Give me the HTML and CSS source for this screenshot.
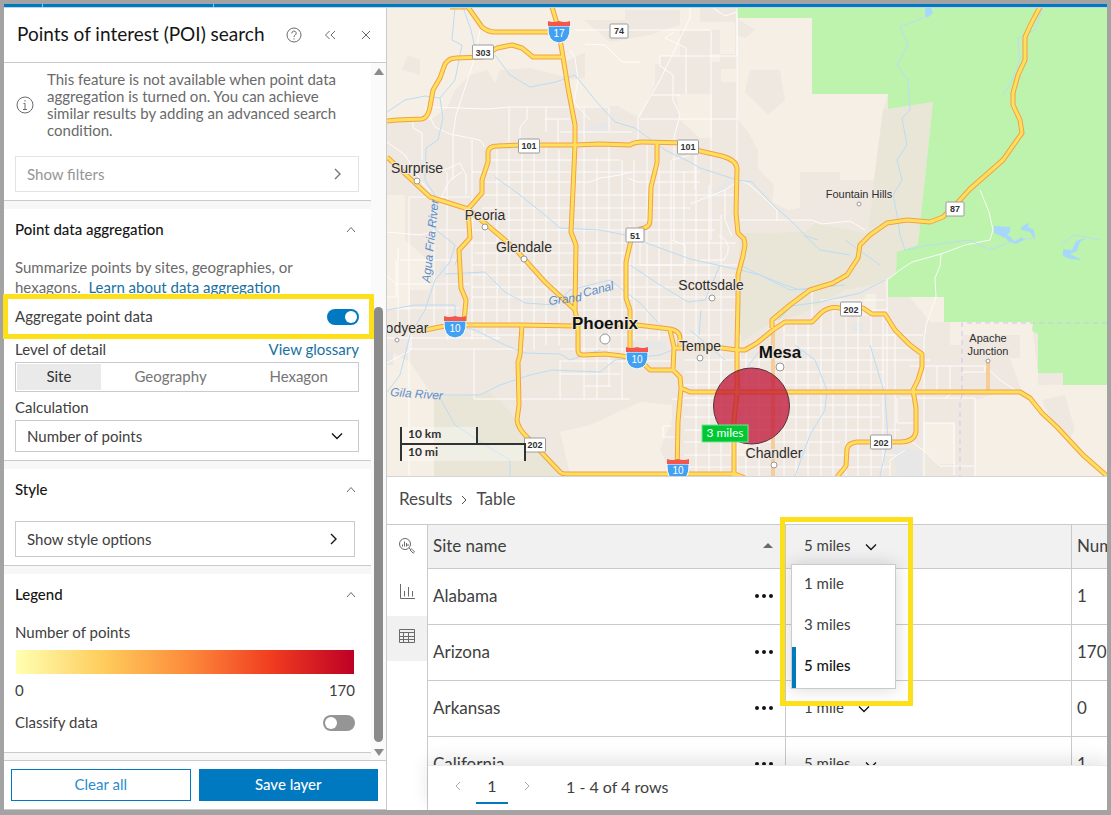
FILE: index.html
```html
<!DOCTYPE html>
<html lang="en">
<head>
<meta charset="utf-8">
<title>Points of interest (POI) search</title>
<link rel="stylesheet" href="styles.css">
</head>
<body>
<div class="app">
  <div class="topbar"><i></i><i></i></div>
  <div class="workspace">
    <aside class="panel">
      <header class="panel-head">
        <h1>Points of interest (POI) search</h1>
        <button class="icon-btn" aria-label="Help"><svg width="16" height="16" viewBox="0 0 16 16"><circle cx="8" cy="8" r="7"/><path d="M5.800 6.400a2.200 2.200 0 1 1 3.300 1.800C8.300 8.700 8 9 8 10"/><path d="M8 11.300v1.200"/></svg></button>
        <button class="icon-btn" aria-label="Collapse"><svg width="16" height="16" viewBox="0 0 16 16"><path d="M7.500 4l-4 4 4 4M13 4L9 8l4 4"/></svg></button>
        <button class="icon-btn" aria-label="Close"><svg width="16" height="16" viewBox="0 0 16 16"><path d="M4 4l8 8M12 4l-8 8"/></svg></button>
      </header>
      <div class="panel-body">
        <div class="panel-content">
          <section class="first">
            <div class="notice">
              <svg width="20" height="20" viewBox="0 0 20 20"><circle cx="10" cy="10" r="8"/><path d="M10 5v1.500M8.500 8.500H10V14M8 14.500h4"/></svg>
              <p>This feature is not available when point data aggregation is turned on. You can achieve similar results by adding an advanced search condition.</p>
            </div>
            <button class="box-btn wide" disabled><span>Show filters</span><svg width="16" height="16" viewBox="0 0 16 16"><path d="M5 3l5 5-5 5"/></svg></button>
          </section>
          <section>
            <h2><button>Point data aggregation<svg width="16" height="16" viewBox="0 0 16 16"><path d="M4 11l4-4.500 4 4.500"/></svg></button></h2>
            <p class="desc">Summarize points by sites, geographies, or hexagons. &nbsp;<a href="#learn">Learn about data aggregation</a></p>
            <div class="row marked"><label for="agg">Aggregate point data</label><input class="switch" type="checkbox" id="agg" checked></div>
            <div class="row level"><span>Level of detail</span><a href="#glossary">View glossary</a></div>
            <div class="segments"><button class="on">Site</button><button>Geography</button><button>Hexagon</button></div>
            <label class="field-label" for="calc">Calculation</label>
            <div class="select-box"><select id="calc"><option>Number of points</option></select><svg width="16" height="16" viewBox="0 0 16 16"><path d="M3 5.500l5 5 5-5"/></svg></div>
          </section>
          <section>
            <h2><button>Style<svg width="16" height="16" viewBox="0 0 16 16"><path d="M4 11l4-4.500 4 4.500"/></svg></button></h2>
            <button class="box-btn style-btn"><span>Show style options</span><svg width="16" height="16" viewBox="0 0 16 16"><path d="M5 3l5 5-5 5"/></svg></button>
          </section>
          <section class="legend">
            <h2><button>Legend<svg width="16" height="16" viewBox="0 0 16 16"><path d="M4 11l4-4.500 4 4.500"/></svg></button></h2>
            <p class="legend-title">Number of points</p>
            <div class="ramp"></div>
            <div class="range"><span>0</span><span>170</span></div>
            <div class="row classify"><label for="cls">Classify data</label><input class="switch" type="checkbox" id="cls"></div>
          </section>
        </div>
        <div class="scrollbar"><b class="up"></b><b class="thumb"></b><b class="down"></b></div>
      </div>
      <footer class="panel-foot"><button class="clear">Clear all</button><button class="save">Save layer</button></footer>
    </aside>

    <main class="main">
      <div class="map">
        <svg class="map-art" viewBox="387 8 720 468" preserveAspectRatio="xMinYMin slice">
          <defs>
            <g id="interstate"><path d="M-11 -5Q-12 11 0 12Q12 11 11 -5Z" fill="#42a0f2" stroke="#fff" stroke-width="1"/><path d="M-11 -5V-10Q-6 -8 0 -10Q6 -8 11 -10V-5Z" fill="#f5564c"/></g>
            <g id="route"><rect x="-9" y="-7" width="18" height="14" rx="1"/></g>
            <g id="route3"><rect x="-10.500" y="-7" width="21" height="14" rx="1"/></g>
            <path id="hwy" d="M450 7H468L482 27Q488 32 495 32H558M387 121L397 120L422 119Q428 118 430 107L433 90L440 78L445 64Q449 58 456 58L483 57L497 48L512 45L522 48L533 57H563M552 7L558 27L563 57L568 88L575 125V145L573 190L571 232L576 245L575 310L578 325V350Q578 355 583 355L605 354L622 356L640 360L650 370H673L680 377L681 388L678 422L677 474M468 209L482 193V180L488 162V152Q489 146 497 146L525 145L575 145L600 144L630 145Q634 142 642 142L688 143L700 151L722 156Q736 160 737 168L736 213L738 233L744 239L745 245L743 256L738 275V300L737 345V392L734 420V476M387 157L401 170L430 197L468 209L505 240L518 252L545 282L575 310M468 209L470 238L459 250L461 288L466 300L464 322M410 331L425 330L445 326L462 325H520L576 326M522 325L520 355L518 362L519 405L517 420Q518 428 526 436L560 472Q562 474 566 474H735L745 478M657 143V163L651 187L650 220Q650 228 640 229L631 240L626 262V298L630 310V350M600 324L637 325L670 329Q681 331 680 340V346M670 330L674 347L673 370M674 348H722L737 350H745L757 343L773 330L785 322H812L822 312Q830 306 840 308H863L872 314H885L895 330L910 345L922 354V367L918 380L913 390L916 408V432Q914 442 900 442H857Q848 443 847 449L846 466L837 477M681 388L690 392H1020L1030 398L1042 413L1057 427L1083 455L1107 476M772 328V320L790 305L810 290L833 283L847 275L858 258L860 245L870 235L887 223L907 220L930 222L943 217L960 200L970 189L1003 160L1022 133L1020 120L1013 105V93L1018 75L1025 60V37L1032 22L1040 7"/>
          </defs>
          <rect x="387" y="7" width="720" height="469" fill="#efe8e1"/>
          <g fill="#f6efe5">
            <path d="M387 7H700V22H735V54H712V62H720V30H680V56H660V64H655V84L640 118L618 106H570V78L530 68L500 70L495 83L488 70L470 75L455 90L447 108L430 120H387Z"/>
            <path d="M737 18H812V94H888L883 110L874 180H840V172H800V208L788 210L772 202L774 185L758 168V150L748 132L737 118Z"/>
            <path d="M676 94H712V138H700L680 120ZM721 69H736V82H721ZM387 195H405V240L430 262V290H410V310H387ZM387 350L410 362L434 398V476H387Z"/>
            <path d="M560 432L590 425L640 402L672 405V420L660 450L672 474H570Z"/>
            <path d="M910 297H944V322H1033V334L1038 373V385L1107 384V476H975V400L1000 392H1022L1010 358H1020V335H962V345H950V322H930ZM923 423H955V464H940L923 450ZM866 294H876V316H858ZM730 440H750V455H730Z"/>
          </g>
          <g fill="#efe8e1"><path d="M408 55L420 60V75L402 70ZM584 20H625V10H680V25L650 35L610 42ZM750 70H780L785 100L768 115L745 92ZM565 62L585 52V78L565 80ZM1042 400L1065 395L1075 430L1070 438L1050 418ZM737 18L755 30L745 38L737 35Z"/></g>
          <path fill="#e9e6d8" d="M740 233L805 232L815 223L850 230L868 234L874 180L883 110L933 102L918 245L897 252L896 274L872 285L845 290L800 315L772 322L737 345L738 275ZM434 398L488 392L500 400L518 422L527 435L560 476H434Z"/>
          <path fill="#bef3ae" d="M737 7V18H812V94H888V109L933 102L918 245L897 252L896 273L888 279V297H944V322H1033L1032 331L1038 334V373H1063V385H1107V7Z"/>
          <path fill="#e7e7e8" d="M585 128L605 122L609 124V131H585ZM712 194L728 178L730 184L716 195ZM630 342H666V350H635ZM892 446L922 452V476H897ZM440 268L447 262V272L440 276ZM387 350L393 352V365H387ZM852 322H863V331H852Z"/>

          <g fill="none" stroke="#fff" stroke-width="1" opacity=".9">
            <path d="M430 107L460 108L487 109L509 107H609M560 132H632M545 119H570M509 107V145M527 107V119L520 127V145M546 107V132M558 119V145M584 107V158M609 107V131M480 30L474 60L456 115L453 135V180M425 107L435 127L450 134L475 139Q483 140 484 147M413 120V128L422 133V160M387 142L405 155L420 180L430 192M575 30H710Q712 32 711 40V240M690 7V18L660 80L638 118V145M660 56H737V7M660 56V66L673 75V100L680 115L674 137V240M640 119H737M652 95H680M686 94V48L665 38L674 32M712 7L725 16L737 12V160M585 44L605 45L622 62H640M570 50L575 58L578 80L574 102L590 120"/>
            <path d="M387 276L396 284H470M396 260V297H387M398 248V330M409 197V476M409 197H470M447 172V250M462 172L450 180L440 200M440 172L460 163L466 175V195M472 140V207M387 232L420 235L440 230H470M400 260H460M434 210V325M447 250V325M397 308H460M387 338H500M387 363L411 350V325M409 349H525M474 349V399H630M447 340V325M497 340V325"/>
            <path d="M472 172H700M488 160H620M485 182H590L600 178L620 175L632 172M480 195H737M482 208H690M470 220H720M470 230H715M470 243H736M475 253H625M472 265H737M472 275H737M472 287H737M472 297H737M466 310H737M472 335H720M560 361H673M560 361V399M560 374H620M585 386H611M560 349H625"/>
            <path d="M472 220V340M484 230V340M497 150V325M509 150V325M522 150V340M534 145V350M546 145V345M559 150V345M584 158V399M597 158V399M609 145V386M622 160V399M634 160V340M647 145V340M659 160V340M671 160V280M684 172V350M696 155V350M709 185V390M721 215V390M690 155L672 160M628 178L637 182H700M690 204L725 190L740 180L750 185L777 210V220M740 220H812L822 224L850 221L865 230M725 190V220L732 236"/>
            <path d="M684 360H930M684 372H885M684 385H885M684 405H880M684 417H880M684 430H900M684 442H840M684 455H896M684 467H890M740 360V335M746 350V476M759 345V476M784 325V476M796 322V476M808 322V476M821 315V476M833 310V476M846 310V476M858 310V476M871 315V476M883 315V470M895 330V442M812 290V322M820 300L885 300M785 335H900M785 348H910M820 310H887M684 398H737V476M696 360V476M709 360V476M721 360V476M684 399H672M672 426H663V437H678"/>
            <path d="M887 280V390M887 280L900 270L912 262L941 254L965 245L990 240L993 230L989 212L980 190M941 254L940 266L935 278L936 297L926 325L924 340V400V476M885 335H923M910 366H985L1000 380L1015 390M937 366V395M950 366V395L945 398M962 372H985V366M900 398H975V476M923 423H954V475M912 442L923 450L940 466H975M897 398V423H917M905 450L890 460V476M630 225V300M640 235V265H685V245L672 240M719 235Q735 245 724 260H700M695 155V190"/>
          </g>
          <g fill="none" stroke="#bbdcf4" stroke-width="1">
            <path d="M455 7L452 40L462 45L455 80L440 98L443 118L438 140L426 148L425 180L435 195L430 225L455 245L450 262L435 280L425 310L410 335L400 375L387 392M463 7L471 30L475 48M495 55L510 75L530 87L556 82L575 75L595 100L615 122L635 128L665 150L690 162L700 168L737 180L752 182L775 207L790 220L806 236L818 240M387 112L405 100L425 96L440 98M495 177L520 195L545 215L560 228L600 230L625 235L660 248L690 259L740 270L760 275L785 285L800 290L830 285M445 274L485 272L505 292L525 303L555 305L570 290L610 280L640 303L665 330M387 310L415 305L455 305V325L475 330L505 345L525 353L560 354L570 360L600 350M437 395L480 395L500 385L530 375L552 370L600 372L615 360L660 355L680 347M440 398L455 425L485 445L510 460V476M462 245L455 265M630 265L660 285L688 302L705 300L720 265M740 265L790 290L845 285M845 240L880 265M804 235L820 250L850 255M885 280L860 293L820 302L792 306L778 320M795 345L815 360L827 390L825 410L810 435L795 476M870 345L885 395L888 440L880 476M930 15L905 25L900 27L908 45L897 65L908 80L910 110L902 118L907 145L897 160L902 180L893 195L898 220L900 235M1043 7L1035 30L1018 38L1020 60L1013 78L1003 95M900 235L905 250L930 245L970 240L990 250L1015 240L1035 238M1062 243L1075 235L1100 240M690 330L725 360M735 375L745 395M738 380L760 350M701 310L699 335"/>
          </g>
          <path fill="#a7d8fc" d="M925 8H931L933 13L927 18L925 14ZM994 226L1010 227V232L1005 238L994 233ZM1020 229L1024 225L1029 223L1028 227L1034 230L1035 240L1030 232L1022 230ZM1002 233L1010 236L1014 242L1022 237L1024 240L1016 244L1008 241ZM1063 249L1072 250L1076 241L1086 238L1080 242L1077 251L1070 254L1082 260L1070 259L1063 256Z"/>
          <path fill="none" stroke="#cfc6e8" stroke-dasharray="5 4" d="M1107 323H962V395L960 402V476"/>
          <path fill="none" stroke="#f4b15e" stroke-width="3" d="M773 328V476M988 361V391"/>
          <path fill="none" stroke="#fbe9ce" stroke-width="1" d="M773 328V476M988 361V391"/>
          <use href="#hwy" class="casing"/><use href="#hwy" class="road"/>
          <circle cx="751.500" cy="406" r="38" fill="#bf1033" fill-opacity=".75" stroke="#57303a"/>
          <g class="route"><use href="#route" x="619" y="31"/><use href="#route3" x="483" y="52"/><use href="#route3" x="529" y="146"/><use href="#route3" x="688" y="147"/><use href="#route" x="635" y="235"/><use href="#route" x="955" y="209"/><use href="#route3" x="851" y="309"/><use href="#route3" x="535" y="445"/><use href="#route3" x="881" y="442"/></g>
          <g class="route-no"><text x="619" y="34">74</text><text x="483" y="56">303</text><text x="529" y="149">101</text><text x="688" y="150">101</text><text x="635" y="239">51</text><text x="955" y="212">87</text><text x="851" y="313">202</text><text x="535" y="448">202</text><text x="881" y="446">202</text></g>
          <use href="#interstate" x="559" y="31"/><use href="#interstate" x="455" y="326"/><use href="#interstate" x="637" y="357"/><use href="#interstate" x="678" y="469"/>
          <g class="inter-no"><text x="559" y="37">17</text><text x="455" y="332">10</text><text x="637" y="363">10</text><text x="678" y="474">10</text></g>
          <g class="towns"><circle cx="417" cy="181" r="3"/><circle cx="485" cy="227" r="3"/><circle cx="524" cy="259" r="3"/><circle cx="712" cy="298" r="3"/><circle cx="700" cy="358" r="3"/><circle cx="774" cy="465" r="3"/><circle cx="780" cy="367" r="4"/><circle cx="605" cy="339" r="5"/><circle cx="397" cy="340" r="2"/><circle cx="859" cy="204" r="2"/><circle cx="988" cy="361" r="2"/></g>
          <g class="water-labels"><text transform="translate(430 283) rotate(-84)">Agua Fria River</text><text transform="translate(549 305) rotate(-7)">Grand</text><text transform="translate(584 297) rotate(-14)">Canal</text><text transform="translate(390 396) rotate(4)">Gila River</text></g>
          <g class="places"><text x="417" y="173">Surprise</text><text x="485" y="220">Peoria</text><text x="524" y="252">Glendale</text><text x="711" y="290">Scottsdale</text><text x="700" y="351">Tempe</text><text x="774" y="458">Chandler</text><text x="407" y="333">odyear</text></g>
          <g class="places small"><text x="859" y="198">Fountain Hills</text><text x="988" y="342">Apache</text><text x="988" y="355">Junction</text></g>
          <g class="places big"><text x="605" y="329">Phoenix</text><text x="780" y="358">Mesa</text></g>
          <rect x="702" y="425" width="46" height="17" fill="#00c832" stroke="#7be293"/><text class="tag" x="725" y="437">3 miles</text>
        </svg>
        <div class="scale"><span class="km">10 km</span><span class="mi">10 mi</span></div>
      </div>

      <section class="results">
        <nav class="crumbs"><span>Results</span><svg width="12" height="12" viewBox="0 0 12 12"><path d="M4 2l4 4-4 4"/></svg><span>Table</span></nav>
        <div class="results-body">
          <nav class="rail">
            <button aria-label="Infographic"><svg width="18" height="18" viewBox="0 0 18 18"><circle cx="7" cy="7" r="5.500"/><path d="M4.500 9.500V7.500M6.500 9.500V4.500M8.500 9.500V6M10 9V7M11 11l1.500 1.500M12 13l1.300-1.300 3.200 3.200-1.300 1.300Z"/></svg></button>
            <button aria-label="Chart"><svg width="18" height="18" viewBox="0 0 18 18"><path d="M2.500 1v14.500H17M6.500 8v5.500M10.500 4v9.500M14.500 8v5.500"/></svg></button>
            <button class="on" aria-label="Table"><svg width="18" height="18" viewBox="0 0 18 18"><path d="M1.500 2.500h15v13h-15ZM1.500 5.500h15M1.500 9.500h15M1.500 12.500h15M5.500 5.500v10M10.500 5.500v10" /></svg></button>
          </nav>
          <div class="table-area">
            <div class="table-view">
              <table>
                <colgroup><col class="c-name"><col class="c-dist"><col class="c-num"></colgroup>
                <thead><tr>
                  <th><div class="cell"><span>Site name</span><b class="sort"></b></div></th>
                  <th class="dist-head">
                    <div class="picker"><select aria-label="Distance"><option>5 miles</option></select><svg width="16" height="16" viewBox="0 0 16 16"><path d="M3 5.500l5 5 5-5"/></svg></div>
                    <div class="focus-frame"></div>
                    <div class="menu"><button>1 mile</button><button>3 miles</button><button class="on">5 miles</button></div>
                  </th>
                  <th>Number of points</th>
                </tr></thead>
                <tbody>
                  <tr><td><div class="cell"><span>Alabama</span><button class="more" aria-label="More"><i></i><i></i><i></i></button></div></td><td></td><td>1</td></tr>
                  <tr><td><div class="cell"><span>Arizona</span><button class="more" aria-label="More"><i></i><i></i><i></i></button></div></td><td></td><td>170</td></tr>
                  <tr><td><div class="cell"><span>Arkansas</span><button class="more" aria-label="More"><i></i><i></i><i></i></button></div></td><td><div class="picker"><select aria-label="Arkansas distance"><option>1 mile</option></select><svg width="16" height="16" viewBox="0 0 16 16"><path d="M3 5.500l5 5 5-5"/></svg></div></td><td>0</td></tr>
                  <tr><td><div class="cell"><span>California</span><button class="more" aria-label="More"><i></i><i></i><i></i></button></div></td><td><div class="picker"><select aria-label="California distance"><option>5 miles</option></select><svg width="16" height="16" viewBox="0 0 16 16"><path d="M3 5.500l5 5 5-5"/></svg></div></td><td>1</td></tr>
                </tbody>
              </table>
            </div>
            <div class="pager">
              <button class="step" aria-label="Previous"><svg width="12" height="12" viewBox="0 0 12 12"><path d="M8 2L4 6l4 4"/></svg></button>
              <button class="page">1</button>
              <button class="step" aria-label="Next"><svg width="12" height="12" viewBox="0 0 12 12"><path d="M4 2l4 4-4 4"/></svg></button>
              <span>1 - 4 of 4 rows</span>
            </div>
          </div>
        </div>
      </section>
    </main>
  </div>
</div>
</body>
</html>
```
FILE: styles.css
```css
* { box-sizing: border-box; }
body { margin: 0; font-family: Lato, "Noto Sans", sans-serif; font-size: 15px; color: #404040; background: #fff; }
h1, h2, p { margin: 0; font-weight: 400; }
h2 { font-size: 15px; }
button, select { font: inherit; color: inherit; background: none; border: 0; padding: 0; margin: 0; }
select { appearance: none; }
select, button:disabled { opacity: 1; }
a { color: #17719f; text-decoration: none; }
svg { flex: none; fill: none; stroke: currentColor; }

.app { display: flex; flex-direction: column; height: 100vh; border: 4px solid #a3a3a3; border-bottom-width: 5px; }
.topbar { display: flex; flex: none; height: 4px; background: #0079c1; border-bottom: 1px solid #b9d5e6; padding-left: 38px; gap: 170px; }
.topbar i { width: 1px; background: #8ec3e2; }
.workspace { display: flex; flex: 1; min-height: 0; }

.panel { display: flex; flex-direction: column; flex: none; width: 383px; border-right: 1px solid #cacaca; border-bottom: 1px solid #cacaca; }
.panel-head { display: flex; align-items: center; flex: none; height: 55px; padding: 0 12px 0 13px; border-bottom: 1px solid #cacaca; color: #6a6a6a; }
.panel-head h1 { flex: 1; font-size: 19px; line-height: 24px; padding-bottom: 2px; color: #151515; white-space: nowrap; }
.icon-btn { display: flex; margin-left: 20px; }
.panel-body { display: flex; flex: 1; min-height: 0; }
.panel-content { flex: 1; }
.panel-content section { padding: 0 12px 8px 11px; border-bottom: 1px solid #cacaca; box-shadow: 0 8px #f7f7f7; margin-bottom: 8px; }
.panel-content .first { padding-top: 8px; }
.notice { display: flex; align-items: center; gap: 12px; margin-bottom: 17px; line-height: 17px; color: #6a6a6a; }
.notice p { flex: 1; padding-right: 16px; }
.box-btn { display: flex; align-items: center; justify-content: space-between; width: calc(100% - 4px); height: 36px; padding: 0 12px 0 11px; border: 1px solid #cacaca; }
.box-btn span { padding-bottom: 1px; }
.box-btn svg, .select-box svg { color: #151515; stroke-width: 1.4; }
.box-btn.wide { width: 100%; border-color: #e3e3e3; color: #959595; }
.box-btn.wide svg { color: #757575; }
h2 button { display: flex; align-items: center; justify-content: space-between; width: 100%; height: 40px; padding-bottom: 1px; font-weight: 500; color: #151515; }
h2 svg { color: #6a6a6a; }
.desc { padding: 8px 40px 0 0; line-height: 20px; color: #6a6a6a; }
.row { display: flex; align-items: center; justify-content: space-between; }
.row label, .row span, .row a { padding-bottom: 2px; }
.marked { position: relative; z-index: 2; height: 45px; margin: -3px -15px 0 -12px; padding: 0 10px 0 7px; border: 5px solid #fde01a; background: #fff; }
.level { height: 23px; padding-bottom: 2px; }
.switch { appearance: none; width: 32px; height: 16px; margin: 0; padding: 2px; border-radius: 8px; background: #959595; display: flex; }
.switch::before { content: ""; width: 12px; height: 12px; border-radius: 50%; background: #fff; }
.switch:checked { background: #0079c1; justify-content: flex-end; }
.segments { display: flex; height: 30px; padding: 1px; border: 1px solid #cacaca; color: #757575; }
.segments button { flex: 117; padding-bottom: 2px; }
.segments button:first-child { flex: 84; }
.segments button:nth-child(2) { flex: 140; }
.segments .on { background: #eaeaea; color: #323232; }
.field-label { display: block; height: 28px; line-height: 30px; }
.select-box { display: flex; align-items: center; height: 32px; padding-right: 13px; border: 1px solid #cacaca; }
.select-box select { flex: 1; height: 30px; padding: 0 0 1px 11px; margin-right: -16px; }
.style-btn { margin-top: 12px; }
.legend-title { line-height: 36px; }
.panel-content .legend { padding-bottom: 12px; margin-bottom: 7px; box-shadow: 0 7px #f7f7f7; }
.ramp { height: 24px; margin: 0 5px 0 1px; background: linear-gradient(90deg, #ffffb2, #fecc5c 26%, #fd8d3c 50%, #f03b20 76%, #bd0026); }
.range { display: flex; justify-content: space-between; padding-right: 4px; line-height: 32px; }
.classify { height: 34px; padding-right: 4px; }
.scrollbar { display: flex; flex-direction: column; align-items: center; width: 15px; padding: 5px 0 4px; background: #fafafa; color: #8b8b8b; }
.up { border: 5px solid transparent; border-top: 0; border-bottom: 7px solid #8b8b8b; margin-bottom: 232px; }
.thumb { width: 9px; flex: 1; border-radius: 5px; background: #8b8b8b; margin-bottom: 7px; }
.down { border: 5px solid transparent; border-bottom: 0; border-top: 7px solid #8b8b8b; }
.panel-foot { display: flex; flex: none; gap: 8px; padding: 8px; padding-left: 7px; border-top: 1px solid #cacaca; }
.panel-foot button { flex: 1; height: 32px; padding-bottom: 3px; border: 1px solid #0079c1; color: #2a8dcb; }
.panel-foot .save { background: #0079c1; color: #fff; font-weight: 500; }

.main { display: flex; flex-direction: column; flex: 1; min-width: 0; }
.map { position: relative; flex: 1; min-height: 0; overflow: hidden; }
.map-art { display: block; width: 100%; height: 100%; stroke: none; }
.casing { fill: none; stroke: #f2a046; stroke-width: 5; stroke-linejoin: round; }
.road { fill: none; stroke: #ffe05c; stroke-width: 3; stroke-linejoin: round; }
.route { fill: #fff; stroke: #9c9c9c; stroke-width: 1; }
.map text { font-family: "Liberation Sans", Arial, sans-serif; text-anchor: middle; }
.route-no { fill: #333; font-size: 9px; font-weight: 700; }
.inter-no { fill: #fff; font-size: 10px; }
.towns { fill: #fff; stroke: #999; stroke-width: 1; }
.places { fill: #2e2e2e; stroke: #efe8e1; stroke-width: 2; paint-order: stroke; font-size: 14px; }
.places.small { font-size: 11px; }
.places.big { font-size: 17px; font-weight: 700; fill: #111; }
.map .water-labels text { fill: #5d8ec9; font-size: 12px; font-style: italic; text-anchor: start; }
.map .tag { fill: #fff; font-family: Lato, sans-serif; font-size: 12px; }
.scale { position: absolute; left: 13px; bottom: 15px; width: 126px; font-size: 12px; font-weight: 700; line-height: 14px; color: #323232; }
.scale span { display: block; height: 18px; padding-left: 6px; background: rgba(255, 255, 255, .35); border: 2px solid #323232; }
.scale .km { width: 78px; border-width: 0 2px; height: 16px; }
.scale .mi { border-bottom: 0; }

.results { flex: none; overflow: hidden; border-top: 1px solid #d5d5d5; }
.crumbs { display: flex; align-items: center; gap: 6px; height: 48px; padding: 0 12px 4px; border-bottom: 1px solid #cacaca; font-size: 17px; color: #4a4a4a; }
.crumbs svg { margin-top: 3px; }
.results-body { display: flex; height: 285px; }
.rail { width: 41px; flex: none; border-right: 1px solid #cacaca; color: #6a6a6a; }
.rail button { display: flex; align-items: center; justify-content: center; width: 40px; height: 46px; padding-bottom: 5px; }
.rail .on { background: #f1f1f1; height: 45px; margin-top: -1px; }
.table-area { display: flex; flex-direction: column; flex: 1; min-width: 0; }
.table-view { flex: 1; min-height: 0; }
table { width: 824px; table-layout: fixed; border-collapse: separate; border-spacing: 0; font-size: 17px; }
.c-name { width: 358px; }
.c-dist { width: 286px; }
th, td { height: 56px; padding: 0 0 3px 5px; border-right: 1px solid #cacaca; border-bottom: 1px solid #cacaca; text-align: left; font-weight: 400; white-space: nowrap; }
th { height: 44px; background: #f1f1f1; }
.cell { display: flex; align-items: center; justify-content: space-between; padding-right: 12px; }
.sort { border: 5px solid transparent; border-top: 0; border-bottom-color: #6a6a6a; }
.more { display: flex; gap: 3px; padding-top: 2px; }
.more i { width: 4px; height: 4px; border-radius: 50%; background: #151515; }
.dist-head { position: relative; }
.picker { display: flex; align-items: center; gap: 12px; padding-left: 13px; font-size: 15px; }
.picker svg { color: #151515; stroke-width: 1.4; margin-top: 3px; }
.focus-frame { position: absolute; z-index: 2; left: -6px; top: -8px; width: 133px; height: 189px; border: 5px solid #fde01a; pointer-events: none; }
.menu { position: absolute; z-index: 1; left: 5px; top: 39px; width: 105px; border: 1px solid #cacaca; background: #fff; box-shadow: 0 0 16px rgba(0, 0, 0, .16); font-size: 15px; }
.menu button { display: block; width: 100%; height: 41px; padding: 0 0 6px 12px; text-align: left; }
.menu .on { border-left: 4px solid #0079c1; padding-left: 8px; font-weight: 500; color: #151515; }
.pager { position: relative; display: flex; align-items: center; flex: none; height: 45px; padding: 0 24px 4px; border-top: 1px solid #eaeaea; background: #fff; box-shadow: 0 -6px 18px rgba(0, 0, 0, .1); font-size: 16px; }
.step { display: flex; color: #aaa; }
.page { width: 32px; height: 36px; margin: 0 13px 0 12px; border-bottom: 2px solid #0079c1; }
.pager span { margin-left: 33px; }
```
